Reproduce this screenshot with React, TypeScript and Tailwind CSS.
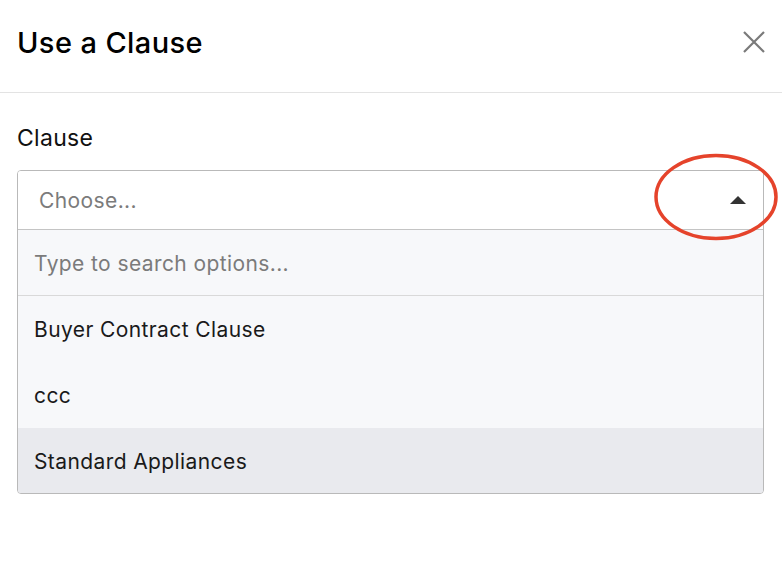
import React from "react";

export default function App() {
  const font = { fontFamily: "Inter, 'Noto Sans', sans-serif" };
  return (
    <div className="relative w-[782px] h-[562px] bg-white text-black" style={font}>
      <div className="h-[93px] border-b border-[#e3e3e3] flex items-center justify-between pl-[17px] pr-[17px]">
        <h1 className="text-[29px] font-medium leading-none tracking-[0.4px] mt-[-8px]">Use a Clause</h1>
        <svg width="22" height="22" viewBox="0 0 22 22" className="mt-[-8px]">
          <path d="M1 1 L21 21 M21 1 L1 21" stroke="#7a7a7a" strokeWidth="2.2" fill="none" />
        </svg>
      </div>
      <div className="pl-[17px] pr-[18px] pt-[31px]">
        <div className="text-[23px] leading-[28px] tracking-[0.3px] text-[#111]">Clause</div>
        <div className="mt-[18px] w-[747px] border border-[#b9b9b9] rounded-[4px] overflow-hidden">
          <div className="h-[59px] border-b border-[#c4c4c4] flex items-center justify-between pl-[21px] pr-[17px] bg-white">
            <span className="text-[21px] tracking-[0.4px] text-[#7b7b7b] pt-[2px]">Choose...</span>
            <svg width="16" height="8" viewBox="0 0 16 8">
              <path d="M0 8 L8 0 L16 8 Z" fill="#333" />
            </svg>
          </div>
          <div className="h-[66px] border-b border-[#d9d9d9] flex items-center pl-[16px] bg-[#f7f8fa]">
            <span className="text-[21px] tracking-[0.4px] text-[#7b7b7b] pt-[2px]">Type to search options...</span>
          </div>
          <div className="h-[66px] flex items-center pl-[16px] bg-[#f7f8fa]">
            <span className="text-[21px] tracking-[0.4px] text-[#1a1a1a] pt-[2px]">Buyer Contract Clause</span>
          </div>
          <div className="h-[66px] flex items-center pl-[16px] bg-[#f7f8fa]">
            <span className="text-[21px] tracking-[0.4px] text-[#1a1a1a] pt-[2px]">ccc</span>
          </div>
          <div className="h-[65px] flex items-center pl-[16px] bg-[#e9eaee]">
            <span className="text-[21px] tracking-[0.4px] text-[#1a1a1a] pt-[2px]">Standard Appliances</span>
          </div>
        </div>
      </div>
      <svg className="absolute left-[654px] top-[153px]" width="126" height="90" viewBox="0 0 126 90">
        <ellipse cx="62" cy="44" rx="60" ry="41.5" fill="none" stroke="#e5432b" strokeWidth="3.5" />
      </svg>
    </div>
  );
}
